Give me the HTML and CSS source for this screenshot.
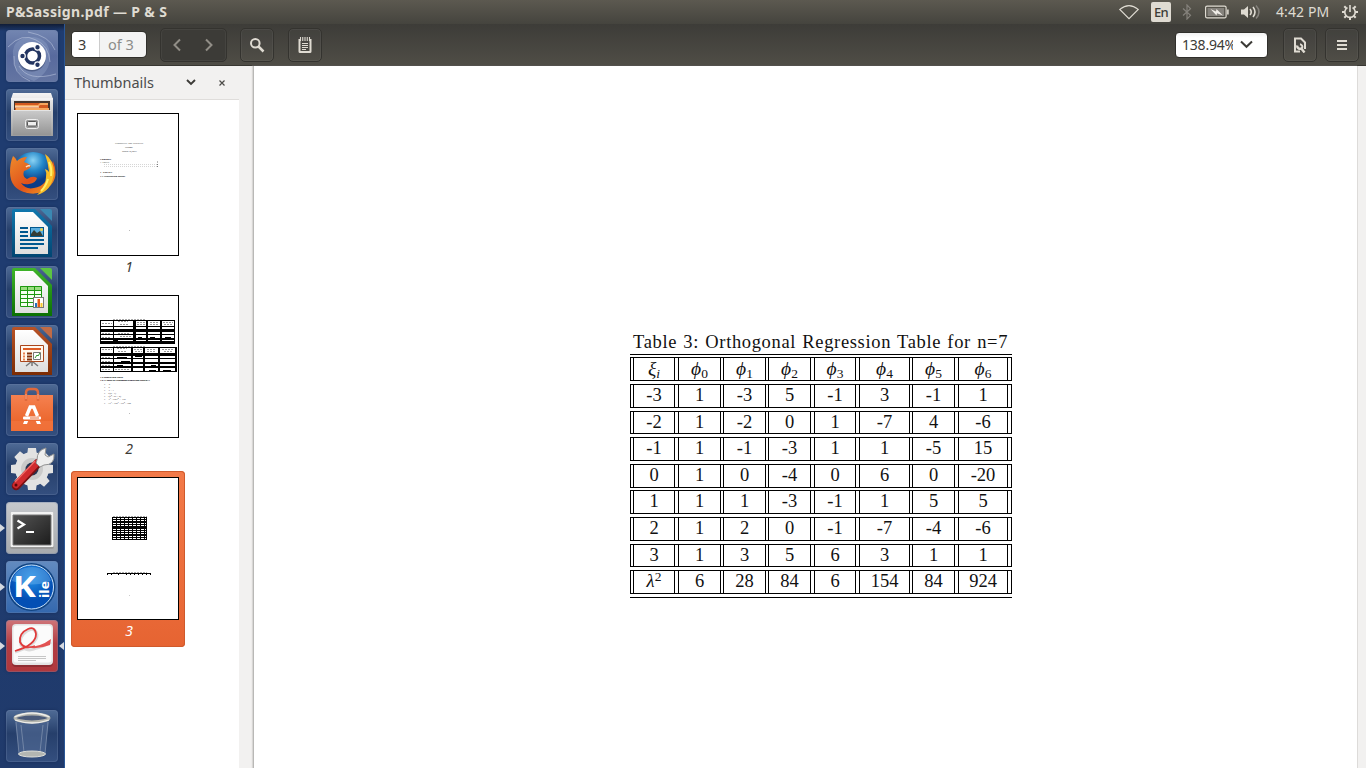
FILE: index.html
```html
<!DOCTYPE html>
<html lang="en">
<head>
<meta charset="utf-8">
<title>P&amp;Sassign.pdf — P &amp; S</title>
<link rel="stylesheet" href="styles.css">
</head>
<body>
<svg class="defs" width="0" height="0" aria-hidden="true">
  <defs>
    <linearGradient id="silver" x2="0" y2="1"><stop offset="0" stop-color="#f4f4f4"/><stop offset="1" stop-color="#9c9c9c"/></linearGradient>
    <linearGradient id="drawer" x2="0" y2="1"><stop offset="0" stop-color="#c9c9c9"/><stop offset="1" stop-color="#959595"/></linearGradient>
    <linearGradient id="paper" x2="0" y2="1"><stop offset="0" stop-color="#fff"/><stop offset="1" stop-color="#dedede"/></linearGradient>
    <linearGradient id="bag" x2="0" y2="1"><stop offset="0" stop-color="#f58150"/><stop offset="1" stop-color="#e85e22"/></linearGradient>
    <linearGradient id="blueDoc" x2="0" y2="1"><stop offset="0" stop-color="#1077ad"/><stop offset="1" stop-color="#014572"/></linearGradient>
    <linearGradient id="greenDoc" x2="0" y2="1"><stop offset="0" stop-color="#3fb52a"/><stop offset="1" stop-color="#0b7003"/></linearGradient>
    <linearGradient id="brownDoc" x2="0" y2="1"><stop offset="0" stop-color="#b95327"/><stop offset="1" stop-color="#7c2c04"/></linearGradient>
    <radialGradient id="globe" cx=".5" cy=".2"><stop offset="0" stop-color="#8bd3f4"/><stop offset=".5" stop-color="#2185c8"/><stop offset="1" stop-color="#0c3c86"/></radialGradient>
    <linearGradient id="fox" x2="1" y2="1"><stop offset="0" stop-color="#ef8b2c"/><stop offset=".55" stop-color="#e0521b"/><stop offset="1" stop-color="#f6a723"/></linearGradient>
    <radialGradient id="kile" cx=".5" cy=".3"><stop offset="0" stop-color="#2390e8"/><stop offset="1" stop-color="#034fb4"/></radialGradient>
    <linearGradient id="screen" x2="1" y2="1"><stop offset="0" stop-color="#555"/><stop offset="1" stop-color="#1c1c1c"/></linearGradient>
  </defs>
</svg>

<header class="panel">
  <h1 class="panel-title">P&amp;Sassign.pdf — P &amp; S</h1>
  <div class="indicators">
    <svg width="20" height="16" viewBox="0 0 20 16"><path d="M.8 5.4Q10-2.2 19.2 5.4L10 14.6Z" fill="none" stroke="#dfdbd2" stroke-width="1.1"/></svg>
    <span class="lang">En</span>
    <svg class="bt" width="10" height="16" viewBox="0 0 10 16"><path d="M1 4.5 8.500 11.300 5 15V1L8.500 4.700 1 11.500" fill="none" stroke="#85827c" stroke-width="1.2"/></svg>
    <svg class="battery" width="24" height="14" viewBox="0 0 24 14"><rect x=".6" y="1.100" width="20.500" height="11.800" rx="1.500" fill="none" stroke="#dfdbd2" stroke-width="1.200"/><path d="M22.900 4.500v5" stroke="#dfdbd2" stroke-width="1.600"/><path d="M2.500 3h16.700v8H2.500z" fill="#85827c"/><path d="m5.500 4 5.500 2.500.5-2.500 6.500 6.500-6-2.200-.5 2.200Z" fill="#f0ede7"/></svg>
    <svg class="sound" width="20" height="16" viewBox="0 0 20 16"><path d="M0 5.500h3L7 2v12L3 10.500H0z" fill="#dfdbd2"/><path d="M9 5q2.500 3 0 6M12 3q4 5 0 10" fill="none" stroke="#dfdbd2" stroke-width="1.600"/><path d="M15 1.500q6 6.500 0 13" fill="none" stroke="#85827c" stroke-width="1.500"/></svg>
    <span class="clock">4:42 PM</span>
    <svg width="16" height="16" viewBox="0 0 16 16"><path d="M5.500 3.600a5.200 5.200 0 1 0 5 0" fill="none" stroke="#dfdbd2" stroke-width="1.600"/><path d="M8 1v7" stroke="#dfdbd2" stroke-width="1.600"/><path d="M2.300 2.300l2 2M13.700 2.300l-2 2M0 8h3M13 8h3M2.300 13.700l2-2M13.700 13.700l-2-2M8 13v3" stroke="#dfdbd2" stroke-width="2"/></svg>
  </div>
</header>

<div class="desktop">
  <nav class="launcher">
    <div class="tile tile-dash"><svg viewBox="0 0 52 52"><path d="M8 31Q2 7 28 7 43 9 44 25 45 42 28 51 8 44 8 31" fill="#93a5cb" opacity=".38"/><path d="M2 17Q16 2 30 10 43 16 44 32M22 2Q44 6 49 20M8 26Q6 44 24 51M13 36Q22 52 50 44" fill="none" stroke="#c6d0e5" stroke-width="1" opacity=".5"/><circle cx="26" cy="27.500" r="14" fill="#17254c" opacity=".4"/><circle cx="26" cy="26" r="14" fill="#fff"/><circle cx="26.500" cy="26" r="7" fill="none" stroke="#233561" stroke-width="3.500"/><g fill="#233561" stroke="#fff" stroke-width="1.200"><circle cx="16.500" cy="26" r="2.800"/><circle cx="31.500" cy="17.300" r="2.800"/><circle cx="31.500" cy="34.700" r="2.800"/></g></svg></div>
    <div class="tile"><svg viewBox="0 0 52 52"><path d="M7 4h38l2 6v37H5V10z" fill="url(#silver)"/><path d="M5 9h42v2H5z" fill="#f2f2f2"/><path d="M8 12h36v12H8z" fill="#46352c"/><path d="M9 14h33v8H9z" fill="#d35a20"/><path d="M9 16h23l2-2h8v2H34l-2 2H9zM10 19h33v4H10z" fill="#f7a75e"/><path d="M9 18h24" stroke="#fff3de"/><path d="M7 22h38v24H7z" fill="url(#drawer)"/><path d="M7 21.500h38" stroke="#e4e4e4"/><rect x="19.500" y="30.500" width="13" height="9" rx="2" fill="#999" stroke="#eee"/><rect x="21.500" y="32.500" width="9" height="4.500" rx="1" fill="#eee" stroke="#555"/></svg></div>
    <div class="tile"><svg viewBox="0 0 52 52"><circle cx="27" cy="25" r="21" fill="url(#globe)"/><path d="M7 8q3 2 4 5 4-4 10-4l-3 5q4 1 7 4-1 3-7 5-2 6 3 8 6-4 10-1-1 5-8 6-4 1-8-1 5 7 13 5 13-2 16-18l3-9q6 15-2 24-9 11-24 8Q4 41 4 24 4 15 7 8Z" fill="url(#fox)"/><path d="M39 6q9 6 9 19-2 18-17 22 9-8 9-18 1-4-1-8 3 1 4 3-1-10-4-18Z" fill="#f9bd28"/><path d="M43 14q3 6 2 14M42 31q-2 7-7 12" stroke="#fff06a" fill="none" stroke-width="2"/><path d="M20 19q2-2 4-1" stroke="#ffe4c6" stroke-width="1.500" fill="none"/></svg></div>
    <div class="tile"><svg viewBox="0 0 52 52"><path d="M8 2h21l17 17v31H6V4q0-2 2-2Z" fill="url(#blueDoc)"/><path d="M9 5h18l15 15v27H9z" fill="url(#paper)"/><path d="M34 2h10q2 0 2 2v10z" fill="#3b88b2"/><path d="M14 21h8M14 25h8M14 29h8M14 33h24M14 37h24M14 41h18" stroke="#01588f" stroke-width="2"/><rect x="24.500" y="20.500" width="13" height="9" fill="#5baede" stroke="#01588f"/><path d="M25 29v-2l3-4 3 3 3-2 3 5z" fill="#343c36"/><circle cx="35.500" cy="22.500" r="1.500" fill="#eed04c"/></svg></div>
    <div class="tile"><svg viewBox="0 0 52 52"><path d="M8 2h21l17 17v31H6V4q0-2 2-2Z" fill="url(#greenDoc)"/><path d="M9 5h18l15 15v27H9z" fill="url(#paper)"/><path d="M34 2h10q2 0 2 2v10z" fill="#5cc442"/><path d="M14 20h22v21H14z" fill="#f5fff1"/><path d="M14 20h22v4H14z" fill="#9add80"/><path d="M14.500 20.500h21v20h-21zM14 24.500h22M14 28.500h22M14 32.500h22M14 36.500h22M21.500 20v21M28.500 20v21" fill="none" stroke="#1d9810"/><rect x="27.500" y="31.500" width="10" height="10" fill="#fff" stroke="#777"/><path d="M29 37h2v4h-2z" fill="#2470b8"/><path d="M31.500 33h2.500v8h-2.500z" fill="#e65b12"/><path d="M34.500 37h2v4h-2z" fill="#f8c82d"/></svg></div>
    <div class="tile"><svg viewBox="0 0 52 52"><path d="M8 2h21l17 17v31H6V4q0-2 2-2Z" fill="url(#brownDoc)"/><path d="M9 5h18l15 15v27H9z" fill="url(#paper)"/><path d="M34 2h10q2 0 2 2v10z" fill="#c06b46"/><path d="M14.500 20.500h23v16h-23z" fill="#fff8ef" stroke="#a9451b"/><path d="M17 24h18" stroke="#dd5b24" stroke-width="2"/><path d="M17 28.500h2M17 31.500h2M17 34.500h2" stroke="#e98151" stroke-width="2"/><path d="M21 28.500h5M21 31.500h5M21 34.500h5" stroke="#84330e" stroke-width="2"/><path d="M27.500 27.500h7v7h-7z" fill="#fff" stroke="#777"/><path d="m29 33 2-3 1 1 2-3" fill="none" stroke="#31982d"/><path d="m25 37-5 4M27 37l5 4M26 37v4" stroke="#777" stroke-width="1.500"/></svg></div>
    <div class="tile"><svg viewBox="0 0 52 52"><path d="M5 11h42v36H5z" fill="url(#bag)"/><path d="M5 37h42v10H5z" fill="#f27640" opacity=".7"/><path d="M20 17V9q0-4 4-4h4q4 0 4 4v8" fill="none" stroke="#df693c" stroke-width="2.500"/><path d="M20 10v5M32 10v5" stroke="#f9a681"/><path d="m20.500 32 3.700-9h3.600l3.700 9" fill="none" stroke="#fff" stroke-width="3.400"/><rect x="17" y="32.500" width="18" height="3" rx="1" fill="#fff"/><path d="M24 34h9" stroke="#e86a34"/><path d="M17 40l1.200-3h4L21 40zM35 40l-1.200-3h-4l1.200 3z" fill="#fff"/></svg></div>
    <div class="tile"><svg viewBox="0 0 52 52"><g fill="#e2e2e2"><circle cx="26" cy="26" r="17"/><g id="teeth"><path d="M22 5h8l1 8H21zM22 47h8l1-8H21zM5 22v8l8 1V21zM47 22v8l-8 1V21z"/></g><use href="#teeth" transform="rotate(45 26 26)"/></g><circle cx="26" cy="26" r="11" fill="#cacaca"/><circle cx="26" cy="26" r="6.500" fill="#263551"/><path d="m10 43 22-23" stroke="#7b1013" stroke-width="8.500" stroke-linecap="round"/><path d="m10 42 21-22" stroke="#cf2a2e" stroke-width="6.500" stroke-linecap="round"/><path d="m9 39 20-21" stroke="#f06a67" stroke-width="1.300"/><path d="M31 17q0-10 9-12l-1 7 3 2 6-3q1 11-10 11l-4 2-4-4Z" fill="#eee" stroke="#929292"/><circle cx="10" cy="42" r="1.500" fill="#5d0709"/></svg></div>
    <div class="tile tile-light running"><svg viewBox="0 0 52 52"><rect x="4" y="10" width="44" height="37" rx="2" fill="#999"/><rect x="4.500" y="10" width="43" height="35" rx="1" fill="#f2f2f2"/><path d="M7 13h38v30H7z" fill="url(#screen)" stroke="#777"/><path d="m11.500 18.500 6.500 4-6.500 4" fill="none" stroke="#fff" stroke-width="2.200"/><path d="M20 30h8" stroke="#fff" stroke-width="2"/></svg></div>
    <div class="tile tile-blue running"><svg viewBox="0 0 52 52"><circle cx="25.500" cy="26" r="24" fill="#114482"/><circle cx="25.500" cy="26" r="22" fill="url(#kile)" stroke="#cbe5ff" stroke-width="1"/><path d="M6 20Q10 6 26 6q15 0 19 14Q25 27 6 20Z" fill="#7ab9ed" opacity=".4"/><text x="7" y="36" class="kile-k" textLength="23" lengthAdjust="spacingAndGlyphs">K</text><text class="kile-ile" transform="translate(43 37) rotate(-90)" textLength="17" lengthAdjust="spacingAndGlyphs">ile</text></svg></div>
    <div class="tile tile-red running focused"><svg viewBox="0 0 52 52"><rect x="6" y="5" width="41" height="42" rx="4" fill="#8f2e33"/><rect x="6" y="4" width="41" height="41" rx="4" fill="#e4e4e4"/><rect x="7.500" y="5.500" width="38" height="37" rx="3" fill="#fbfbfb"/><path d="M9 32Q31 25 31 15 29 6 21 11 12 17 15 25 20 33 31 28 39 26 45 22" fill="none" stroke="#bdbdbd" stroke-width="3" opacity=".5"/><path d="M9 31Q30 25 30 14 29 6 22 9 13 13 14 22 18 30 29 26" fill="none" stroke="#e03a3a" stroke-width="1.800"/><path d="M19 27q14 1 26-8l-1 6q-13 5-25 2Z" fill="#e25252"/><path d="M12 36.500h28M12 38.500h28M12 40.500h18" stroke="#c6c6c6"/></svg></div>
    <div class="tile tile-trash"><svg viewBox="0 0 52 52"><path d="m9 10 4 33q13 7 26 0l4-33z" fill="#536c96" opacity=".6"/><path d="m10 12 3 32M42 12l-3 32M15 15l3 27M37 15l-3 27" stroke="#98a7bf" opacity=".55"/><ellipse cx="26" cy="44" rx="13.500" ry="3" fill="#b3b6b2" stroke="#e0e0da"/><ellipse cx="26" cy="8" rx="17" ry="4" fill="#4a5a79" stroke="#b4b5ae" stroke-width="3"/><path d="M8.500 7q17.500-8 35 0M9 10q17 6 34 0" fill="none" stroke="#eeeeea" stroke-width="1.300"/></svg></div>
  </nav>

  <main class="window">
    <div class="toolbar">
      <div class="page-entry"><span class="page-no">3</span><span class="page-of">of 3</span></div>
      <div class="btn nav-btns">
        <svg width="10" height="14" viewBox="0 0 10 14"><path d="M8 1.500 2.500 7 8 12.500" fill="none" stroke="#918e87" stroke-width="2"/></svg>
        <svg width="10" height="14" viewBox="0 0 10 14"><path d="M2 1.500 7.500 7 2 12.500" fill="none" stroke="#918e87" stroke-width="2"/></svg>
      </div>
      <div class="btn search-btn"><svg width="16" height="16" viewBox="0 0 16 16"><circle cx="6.300" cy="6.300" r="4.300" fill="none" stroke="#dfdbd2" stroke-width="2"/><path d="m9.500 9.500 5 5" stroke="#dfdbd2" stroke-width="2.500"/></svg></div>
      <div class="btn"><svg width="14" height="18" viewBox="0 0 14 18"><path d="M.5 3v12.500q0 1.500 1.500 1.500h10q1.500 0 1.500-1.500V3h-2v12h-9V3z" fill="#dfdbd2"/><path d="M2.500 1v4M4.750 1v4M7 1v4M9.250 1v4M11.500 1v4" stroke="#dfdbd2" stroke-width="1.100"/><path d="M4 7.500h6M4 9.500h6M4 11.500h6M4 13.500h4" stroke="#dfdbd2"/></svg></div>
      <div class="zoom-entry"><span class="zoom-value">138.94%</span><svg width="13" height="9" viewBox="0 0 13 9"><path d="m1 1.500 5.500 5.300L12 1.500" fill="none" stroke="#3c3b37" stroke-width="2"/></svg></div>
      <div class="btn tools-btn"><svg width="12" height="16" viewBox="0 0 12 16"><path d="M6 14.500H1V1.500h6L11 5.500V12" fill="none" stroke="#dfdbd2" stroke-width="2"/><path d="M3.300 8.500a2.800 2.800 0 0 0 4 3L10.500 15.500" fill="none" stroke="#dfdbd2" stroke-width="2.400"/><path d="M6 7.200a2.700 2.700 0 0 1 2 4" fill="none" stroke="#dfdbd2" stroke-width="2"/></svg></div>
      <div class="btn"><svg width="10" height="12" viewBox="0 0 10 12"><path d="M0 2h10M0 6h10M0 10h10" stroke="#dfdbd2" stroke-width="2"/></svg></div>
    </div>

    <div class="content">
      <aside class="sidebar">
        <div class="side-head">
          <span class="side-title">Thumbnails</span>
          <svg width="10" height="7" viewBox="0 0 10 7"><path d="m1 1 4 4 4-4" fill="none" stroke="#3c3b37" stroke-width="1.900"/></svg>
          <svg class="close" width="8" height="8" viewBox="0 0 8 8"><path d="m1.500 1.500 5 5m0-5-5 5" stroke="#4c4b47" stroke-width="1.200"/></svg>
        </div>
        <div class="thumbs">
          <figure class="thumb">
            <svg class="sheet" viewBox="0 0 100 141"><g class="tiny"><text x="37" y="30" textLength="28">Probability and Statistics</text><text x="47" y="34" textLength="8">P. Swamy</text><text x="44" y="38" textLength="15">March 10, 2017</text><g class="strong"><text x="22" y="46" textLength="11">Contents</text><text x="22" y="59" textLength="12">1 Tables</text><text x="22" y="63" textLength="25">1.1 Statistician Tables</text></g><text x="22" y="49" textLength="9">1 Tables</text></g><path d="M26 50.500h53M26 52.500h53" stroke="#bbb" stroke-dasharray="1 1" stroke-width=".6"/><path d="M79 47.500h1v1h-1zM79 50h1v1h-1zM79 52h1v1h-1z" fill="#777"/><path d="M51 116h1v1h-1z" fill="#bbb"/></svg>
            <figcaption>1</figcaption>
          </figure>
          <figure class="thumb">
            <svg class="sheet" viewBox="0 0 100 141" shape-rendering="crispEdges">
              <path d="M35 23.500h32M35 50.500h32" stroke="#aaa" stroke-dasharray="2 1"/>
              <path d="M22 24h75v24H22zM22 51h77v25H22z"/>
              <path d="M23 25h12v5H23zM36 25h19v5H36zM58 25h10v5H58zM70 25h12v5H70zM84 25h12v5H84zM23 31h12v2H23zM36 31h19v2H36zM58 31h10v2H58zM70 31h12v2H70zM84 31h12v2H84zM23 36h12v2H23zM36 36h19v2H36zM58 36h10v2H58zM70 36h12v2H70zM84 36h12v2H84zM23 39h12v3H23zM36 39h19v3H36zM58 39h10v3H58zM70 39h12v3H70zM84 39h12v3H84zM23 44h12v1H23zM40 44h15v1H40zM58 44h10v1H58zM70 44h12v1H70zM84 44h12v1H84zM23 52h12v5H23zM36 52h17v5H36zM55 52h10v5H55zM67 52h13v5H67zM82 52h15v5H82zM23 60h12v2H23zM36 60h17v2H36zM55 60h10v2H55zM67 60h13v2H67zM82 60h15v2H82zM23 63h12v3H23zM36 63h17v3H36zM55 63h10v3H55zM67 63h13v3H67zM82 63h15v3H82zM23 68h12v2H23zM36 68h17v2H36zM55 68h10v2H55zM67 68h13v2H67zM82 68h15v2H82zM23 72h12v3H23zM36 72h17v3H36zM55 72h10v3H55zM67 72h13v3H67zM82 72h15v3H82z" fill="#fff"/>
              <path d="M24 27.500h10M40 25.500h10M42 28.500h8M59 26.500h8M59 28.500h8M72 26.500h9M72 28.500h8M85 26.500h10M86 28.500h8M24 37.500h9M24 41.500h9M40 37.500h12M42 40.500h12M24 53.500h10M39 52.500h10M40 55.500h9M56 53.500h8M57 55.500h7M69 53.500h9M69 55.500h9M84 53.500h11M86 55.500h8M24 61.500h9M24 65.500h9M24 69.500h9M24 73.500h9M37 73.500h14" stroke="#999" stroke-dasharray="2 1"/>
              <path d="M59 38.500h6M71 38.500h7M86 38.500h8M60 41.500h4M72 41.500h5M87 41.500h6M39 61.500h10M43 65.500h9M39 69.500h6M73 69.500h5M71 74.500h7M85 74.500h8M57 60.500h7" stroke="#000"/>
              <g class="tiny"><g class="strong"><text x="22" y="82" textLength="23">1.2 Regression Table</text><text x="22" y="85" textLength="50">1.2.1 Linear to Orthogonal Regression Table n=3</text></g><text x="26" y="88.500" textLength="6">y = a</text><text x="26" y="91.500" textLength="6">y = b</text><text x="26" y="94.500" textLength="10">y = x - 1</text><text x="26" y="98" textLength="12">y = x(2 - 1)</text><text x="26" y="101" textLength="17">y = 3(x² - 5x + 2)</text><text x="26" y="104" textLength="22">y = x³ - 60x² + 12x</text><text x="26" y="108" textLength="27">y = 3x⁴ - 10x³ + 8x² - 100</text></g><path d="M51 117h1v1h-1z" fill="#bbb"/>
            </svg>
            <figcaption>2</figcaption>
          </figure>
          <figure class="thumb selected">
            <svg class="sheet" viewBox="0 0 100 141" shape-rendering="crispEdges">
              <path d="M35 38.500h34M35 94.500h34" stroke="#aaa" stroke-dasharray="2 1"/><path d="M34 39h35v23H34z"/>
              <path d="M35 40.500h33M35 42.500h33M35 45.500h33M35 47.500h33M35 51.500h33M35 53.500h33M35 55.500h33M35 58.500h33M35 60.500h33" stroke="#fff" stroke-dasharray="3 1"/>
              <path d="M29 95h44v1H29zM29 96h1v1h-1zM33 96h1v1h-1zM40 96h1v1h-1zM48 96h1v1h-1zM52 96h1v1h-1zM56 96h1v1h-1zM60 96h1v1h-1zM64 96h1v1h-1zM68 96h1v1h-1zM72 96h1v1h-1z"/><path d="M51 117h1v1h-1z" fill="#ccc"/>
            </svg>
            <figcaption>3</figcaption>
          </figure>
        </div>
      </aside>

      <section class="document">
        <div class="tex">
          <p class="caption">Table 3: Orthogonal Regression Table for n=7</p>
          <div class="matrix">
            <div class="row head"><b><em>ξ<sub>i</sub></em></b><b><em>ϕ</em><sub>0</sub></b><b><em>ϕ</em><sub>1</sub></b><b><em>ϕ</em><sub>2</sub></b><b><em>ϕ</em><sub>3</sub></b><b><em>ϕ</em><sub>4</sub></b><b><em>ϕ</em><sub>5</sub></b><b><em>ϕ</em><sub>6</sub></b></div>
            <div class="row"><b>-3</b><b>1</b><b>-3</b><b>5</b><b>-1</b><b>3</b><b>-1</b><b>1</b></div>
            <div class="row short"><b>-2</b><b>1</b><b>-2</b><b>0</b><b>1</b><b>-7</b><b>4</b><b>-6</b></div>
            <div class="row"><b>-1</b><b>1</b><b>-1</b><b>-3</b><b>1</b><b>1</b><b>-5</b><b>15</b></div>
            <div class="row tight"><b>0</b><b>1</b><b>0</b><b>-4</b><b>0</b><b>6</b><b>0</b><b>-20</b></div>
            <div class="row"><b>1</b><b>1</b><b>1</b><b>-3</b><b>-1</b><b>1</b><b>5</b><b>5</b></div>
            <div class="row"><b>2</b><b>1</b><b>2</b><b>0</b><b>-1</b><b>-7</b><b>-4</b><b>-6</b></div>
            <div class="row short"><b>3</b><b>1</b><b>3</b><b>5</b><b>6</b><b>3</b><b>1</b><b>1</b></div>
            <div class="row"><b><em>λ</em><sup>2</sup></b><b>6</b><b>28</b><b>84</b><b>6</b><b>154</b><b>84</b><b>924</b></div>
          </div>
        </div>
      </section>
    </div>
  </main>
</div>
</body>
</html>
```

FILE: styles.css
```css
* { box-sizing: border-box; }
body { margin: 0; width: 1366px; height: 768px; overflow: hidden; font-family: "Noto Sans", "Open Sans", sans-serif; background: #fff; }
svg { display: block; flex: none; }
.defs { position: absolute; }

.panel { height: 24px; display: flex; align-items: center; justify-content: space-between; padding: 0 8px 0 6px; color: #dfdbd2; background: linear-gradient(#5c5950, #45443e); }
.panel-title { margin: 0; font: bold 14px/24px "Noto Sans", sans-serif; letter-spacing: 0.350px; }
.indicators { display: flex; align-items: center; }
.lang { margin-left: 12px; width: 20px; height: 20px; border-radius: 2px; background: #dfdbd2; color: #3c3b37; font-size: 13px; font-weight: 500; line-height: 20px; text-align: center; letter-spacing: -0.7px; }
.bt { margin-left: 11px; }
.battery { margin-left: 13px; }
.sound { margin-left: 12px; }
.clock { margin-left: 15px; width: 54px; font-size: 14px; line-height: 24px; letter-spacing: 0.100px; white-space: nowrap; margin-right: 12px; }

.desktop { display: flex; height: 744px; }
.launcher { width: 65px; padding: 6px; display: flex; flex-direction: column; gap: 7px; background: linear-gradient(#101c36, #1f3c70 7px, #1f3c70 60%, #203a6b); border-right: 1px solid #2a5797; }
.tile { position: relative; flex: none; width: 52px; height: 52px; border-radius: 4px; background: linear-gradient(#4f6b96, #263f6b 45%, #344f7f); box-shadow: inset 0 0 0 1px #6b82a955, 0 0 3px #0b1c3c66; }
.tile svg { width: 52px; height: 52px; }
.tile-dash { background: linear-gradient(#7386b1, #586a9d 50%, #6475a2); }
.tile-light { background: linear-gradient(#c6c8cc, #a6a9ad); }
.tile-blue { background: linear-gradient(#638bc0, #3468ae); }
.tile-red { background: linear-gradient(#cf7579, #b23d43 45%, #b0383d); }
.tile-trash { margin-top: 31px; }
.running::before { content: ""; position: absolute; left: -6px; top: 22px; border: 4px solid transparent; border-left: 5px solid #d5d9e0; border-right: 0; }
.focused::after { content: ""; position: absolute; right: -6px; top: 22px; border: 4px solid transparent; border-right: 5px solid #d5d9e0; border-left: 0; }
.kile-k { font: bold 29px "Noto Sans", sans-serif; fill: #fff; }
.kile-ile { font: bold 13px "Noto Sans", sans-serif; fill: #fff; }

.window { flex: 1; display: flex; flex-direction: column; }
.toolbar { height: 42px; display: flex; align-items: center; padding: 0 7px; color: #3c3b37; background: linear-gradient(#3d3c38, #4f4d46); border-bottom: 1px solid #383732; }
.page-entry { display: flex; width: 74px; height: 25px; border-radius: 4px; overflow: hidden; background: #f3f3f3; font-size: 14.500px; line-height: 24px; box-shadow: 0 0 0 1px #302f2b; }
.page-no { width: 28px; padding-left: 6px; background: #fff; border-right: 1px solid #ccc; }
.page-of { padding-left: 8px; color: #8c8c8a; }
.btn { width: 34px; height: 34px; margin-left: 14px; border: 1px solid #34332f; border-radius: 5px; display: flex; align-items: center; justify-content: center; background: #ffffff04; box-shadow: inset 0 0 0 1px #ffffff0c; }
.nav-btns { width: 67px; gap: 22px; padding-right: 2px; background: #3c3b37; }
.search-btn { margin-left: 13px; }
.zoom-entry { display: flex; align-items: center; gap: 7px; width: 93px; height: 26px; margin-left: auto; padding-left: 6px; border-radius: 4px; background: linear-gradient(#f2f2f2, #fff 5px); border: 1px solid #302f2b; font-size: 14px; line-height: 24px; }
.zoom-value { width: 51px; overflow: hidden; letter-spacing: -0.200px; }
.tools-btn { margin-left: 15px; }
.tools-btn + .btn { margin-left: 8px; }

.content { flex: 1; display: flex; background: #f2f1f0; padding-right: 8px; }
.sidebar { width: 174px; display: flex; flex-direction: column; }
.side-head { height: 34px; display: flex; align-items: center; padding: 0 13px 0 9px; border-bottom: 1px solid #dfdddb; color: #4c4c4c; }
.side-title { flex: 1; font-size: 14.500px; line-height: 20px; padding-bottom: 1px; }
.side-head .close { margin-left: 22px; }
.thumbs { flex: 1; padding: 7px 6px; background: #fff; display: flex; flex-direction: column; gap: 6px; }
.thumb { margin: 0; width: 114px; height: 176px; padding: 6px; border-radius: 4px; color: #3c3b37; }
.sheet { width: 102px; height: 143px; background: #fff; border: 1px solid #000; }
.thumb figcaption { text-align: center; font: italic 14px/22px "Noto Sans", sans-serif; padding-left: 2px; }
.selected { background: linear-gradient(#f37a49, #e66432); box-shadow: inset 0 0 0 1px #cf5a2c; }
.selected figcaption { color: #fff; }
.tiny { font: 2.800px "Liberation Serif", serif; fill: #444; }
.strong { font-weight: bold; fill: #000; }

.document { margin-left: 14px; flex: 1; background: #fff; border-left: 1px solid #b9b8b6; border-right: 1px solid #dddbd9; padding: 266px 0 0 376px; box-shadow: -1px 0 1px #d8d7d5; }
.tex { width: 382px; font-family: "Liberation Serif", serif; color: #111; }
.caption { margin: 0; height: 22px; padding-left: 3px; font-size: 18.500px; line-height: 21px; letter-spacing: 0.650px; word-spacing: 1px; white-space: nowrap; }
.matrix { border-top: 1px solid #000; border-bottom: 1px solid #000; padding: 2px 0 3px; display: flex; flex-direction: column; gap: 3px; }
.row { height: 24px; border: 1px solid #000; display: grid; padding-left: 2px; grid-template-columns: 42px 3px 43px 2px 43px 2px 43px 3px 42px 3px 51px 2px 43px 3px 50px; font-size: 18.500px; line-height: 20px; }
.row b { font-weight: normal; text-align: center; border: solid #000; border-width: 0 1px; height: 22px; }
.row b:nth-child(1) { grid-column: 1; }
.row b:nth-child(2) { grid-column: 3; }
.row b:nth-child(3) { grid-column: 5; }
.row b:nth-child(4) { grid-column: 7; }
.row b:nth-child(5) { grid-column: 9; }
.row b:nth-child(6) { grid-column: 11; }
.row b:nth-child(7) { grid-column: 13; }
.row b:nth-child(8) { grid-column: 15; }
.row.head { line-height: 22px; }
.row.head em { font-size: 19.500px; }
.row.short { height: 23px; }
.row.short b { height: 21px; }
.row.tight { margin-bottom: -1px; }
.row sub { font-size: 13.500px; line-height: 0; vertical-align: -3px; }
.row sup { font-size: 13.500px; line-height: 0; vertical-align: 6px; }
```
